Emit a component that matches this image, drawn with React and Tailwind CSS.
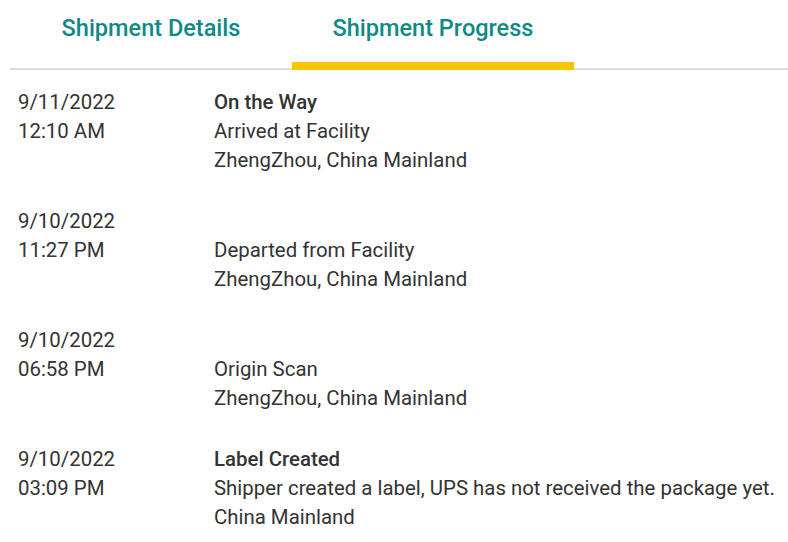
import React from 'react';

const events = [
  { date: '9/11/2022', time: '12:10 AM', title: 'On the Way', desc: 'Arrived at Facility', place: 'ZhengZhou, China Mainland' },
  { date: '9/10/2022', time: '11:27 PM', title: '', desc: 'Departed from Facility', place: 'ZhengZhou, China Mainland' },
  { date: '9/10/2022', time: '06:58 PM', title: '', desc: 'Origin Scan', place: 'ZhengZhou, China Mainland' },
  { date: '9/10/2022', time: '03:09 PM', title: 'Label Created', desc: 'Shipper created a label, UPS has not received the package yet.', place: 'China Mainland' },
];

function Tabs() {
  return (
    <div className="ml-[10px] flex h-[70px] border-b-2 border-[#dedede]">
      <button className="w-[282px] pt-[14px] text-[23.5px] leading-[28px] font-medium text-[#0d8a85] self-start">
        Shipment Details
      </button>
      <button className="relative w-[282px] h-full pt-[14px] text-[23.5px] leading-[28px] font-medium text-[#0d8a85] flex justify-center items-start">
        Shipment Progress
        <span className="absolute left-0 right-0 -bottom-[2px] h-[8px] bg-[#ffc400]" />
      </button>
    </div>
  );
}

export default function App() {
  return (
    <div className="w-[788px] h-[542px] bg-white font-['Roboto',sans-serif] text-[#333]">
      <Tabs />
      <div className="mt-[18px] flex flex-col gap-[32px]">
        {events.map((e, i) => (
          <div key={i} className="flex text-[20.4px] leading-[29px]">
            <div className="w-[214px] pl-[18px]">
              <div>{e.date}</div>
              <div>{e.time}</div>
            </div>
            <div>
              <div className="font-medium h-[29px]">{e.title}</div>
              <div>{e.desc}</div>
              <div>{e.place}</div>
            </div>
          </div>
        ))}
      </div>
    </div>
  );
}
